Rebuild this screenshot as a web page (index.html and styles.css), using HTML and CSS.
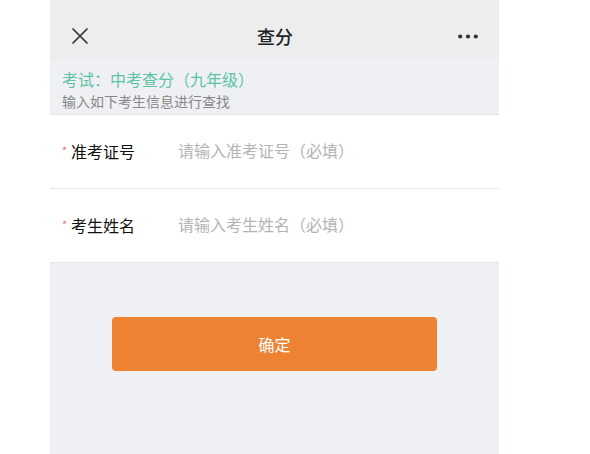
FILE: index.html
```html
<!DOCTYPE html>
<html lang="zh-CN">
<head>
<meta charset="utf-8">
<title>查分</title>
<link rel="stylesheet" href="styles.css">
</head>
<body>
<div class="page">
  <header class="nav">
    <span class="nav-left">
      <svg class="icon-close" width="16" height="16" viewBox="0 0 16 16"><path d="M1 1L15 15M15 1L1 15" stroke="#333" stroke-width="1.7" fill="none" stroke-linecap="round"/></svg>
    </span>
    <h1 class="nav-title">查分</h1>
    <span class="nav-right">
      <svg class="icon-more" width="20" height="5" viewBox="0 0 20 5"><circle cx="2.2" cy="2.5" r="2.1" fill="#333"/><circle cx="10" cy="2.5" r="2.1" fill="#333"/><circle cx="17.8" cy="2.5" r="2.1" fill="#333"/></svg>
    </span>
  </header>
  <section class="info">
    <div class="info-title">考试：中考查分（九年级）</div>
    <div class="info-sub">输入如下考生信息进行查找</div>
  </section>
  <form class="form">
    <label class="row">
      <span class="label"><span class="star">*</span>准考证号</span>
      <input class="field" type="text" placeholder="请输入准考证号（必填）">
    </label>
    <label class="row">
      <span class="label"><span class="star">*</span>考生姓名</span>
      <input class="field" type="text" placeholder="请输入考生姓名（必填）">
    </label>
  </form>
  <div class="actions">
    <button class="btn" type="button">确定</button>
  </div>
</div>
</body>
</html>
```
FILE: styles.css
```css
* { box-sizing: border-box; }
html, body {
  margin: 0;
  padding: 0;
  background: #ffffff;
  font-family: "Noto Sans CJK SC", "Noto Sans", sans-serif;
}
.page {
  margin-left: 50px;
  width: 449px;
  min-height: 454px;
  background: #eff0f4;
}
.nav {
  height: 59px;
  background: #ededed;
  display: grid;
  grid-template-columns: 1fr auto 1fr;
  align-items: center;
  padding: 13px 21px 0 22px;
}
.nav-left { display: flex; justify-content: flex-start; }
.nav-right { display: flex; justify-content: flex-end; }
.nav-title {
  margin: 0;
  font-size: 18px;
  font-weight: 500;
  color: #222222;
  line-height: 24px;
}
.info {
  padding: 9px 12px 3px;
}
.info-title {
  font-size: 16px;
  line-height: 22px;
  color: #5cc4a5;
}
.info-sub {
  margin-top: 2px;
  font-size: 14px;
  line-height: 19px;
  color: #888888;
}
.form {
  margin: 0;
  background: #ffffff;
  border-top: 1px solid #e6e6e6;
}
.row {
  height: 74px;
  display: flex;
  align-items: center;
  padding-left: 12px;
  border-bottom: 1px solid #e6e6e6;
}
.label {
  width: 116px;
  flex: none;
  font-size: 16px;
  color: #111111;
  display: flex;
  align-items: center;
  margin-top: -1px;
}
.star {
  width: 9px;
  font-size: 11px;
  color: #f06a6a;
  margin-top: -3px;
}
.field {
  flex: 1;
  border: none;
  outline: none;
  background: transparent;
  font-family: "Noto Sans CJK SC", "Noto Sans", sans-serif;
  font-size: 16px;
  padding: 0;
  color: #111111;
  margin-top: -4px;
}
.field::placeholder { color: #b4b4b4; }
.actions {
  padding: 54px 62px 0;
}
.btn {
  display: block;
  width: 100%;
  height: 54px;
  border: none;
  border-radius: 4px;
  background: #ed8332;
  color: #ffffff;
  font-family: "Noto Sans CJK SC", "Noto Sans", sans-serif;
  font-size: 16px;
  padding: 0;
}
```
